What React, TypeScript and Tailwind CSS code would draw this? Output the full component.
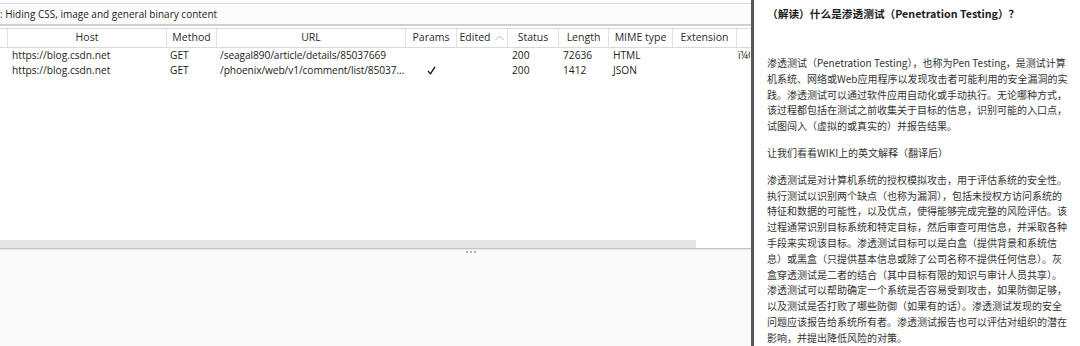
import React from 'react';

const columns = [
  { label: '', cell: 'border-r border-[#e2e2e2]' },
  { label: 'Host', cell: 'border-r border-[#e2e2e2]' },
  { label: 'Method', cell: 'border-r border-[#e2e2e2]' },
  { label: 'URL', cell: 'border-r border-[#e2e2e2]' },
  { label: 'Params', cell: 'border-r border-[#e2e2e2]' },
  { label: 'Edited', cell: 'border-r border-[#e2e2e2]' },
  { label: 'Status', cell: 'border-r border-[#e2e2e2]' },
  { label: 'Length', cell: 'border-r border-[#e2e2e2]' },
  { label: 'MIME type', cell: 'border-r border-[#e2e2e2]' },
  { label: 'Extension', cell: 'border-r border-[#e2e2e2]' },
  { label: '', cell: '' },
];

const rows = [
  {
    host: 'https://blog.csdn.net',
    method: 'GET',
    url: '/seagal890/article/details/85037669',
    params: false,
    status: '200',
    length: '72636',
    mime: 'HTML',
    title: 'ï¼Œ',
  },
  {
    host: 'https://blog.csdn.net',
    method: 'GET',
    url: '/phoenix/web/v1/comment/list/85037...',
    params: true,
    status: '200',
    length: '1412',
    mime: 'JSON',
    title: '',
  },
];

const intro = [
  '渗透测试（Penetration Testing），也称为Pen Testing，是测试计算',
  '机系统、网络或Web应用程序以发现攻击者可能利用的安全漏洞的实',
  '践。渗透测试可以通过软件应用自动化或手动执行。无论哪种方式，',
  '该过程都包括在测试之前收集关于目标的信息，识别可能的入口点，',
  '试图闯入（虚拟的或真实的）并报告结果。',
];

const wiki = [
  '渗透测试是对计算机系统的授权模拟攻击，用于评估系统的安全性。',
  '执行测试以识别两个缺点（也称为漏洞），包括未授权方访问系统的',
  '特征和数据的可能性，以及优点，使得能够完成完整的风险评估。该',
  '过程通常识别目标系统和特定目标，然后审查可用信息，并采取各种',
  '手段来实现该目标。渗透测试目标可以是白盒（提供背景和系统信',
  '息）或黑盒（只提供基本信息或除了公司名称不提供任何信息）。灰',
  '盒穿透测试是二者的结合（其中目标有限的知识与审计人员共享）。',
  '渗透测试可以帮助确定一个系统是否容易受到攻击，如果防御足够，',
  '以及测试是否打败了哪些防御（如果有的话）。渗透测试发现的安全',
  '问题应该报告给系统所有者。渗透测试报告也可以评估对组织的潜在',
  '影响，并提出降低风险的对策。',
];

const gridCols =
  'grid grid-cols-[8px_159px_50px_189px_51px_51px_51px_50px_64px_64px_13px]';

const SortUp = () => (
  <svg width="9" height="6" viewBox="0 0 9 6" className="ml-[5px]">
    <path d="M0.5 5 L4.5 1 L8.5 5" fill="none" stroke="#b5b5b5" strokeWidth="1" />
  </svg>
);

const Check = () => (
  <svg width="9" height="9" viewBox="0 0 9 9">
    <path d="M1 4.8 L3.4 7.8 L8 0.8" fill="none" stroke="#111" strokeWidth="1.3" strokeLinejoin="round" />
  </svg>
);

const App: React.FC = () => {
  return (
    <div className="flex h-[346px] w-[1080px] overflow-hidden bg-white">
      {/* Proxy history pane */}
      <div
        className="flex w-[751px] flex-col text-[10px] text-[#1b1b1b]"
        style={{ fontFamily: '"Open Sans", "Noto Sans", sans-serif' }}
      >
        <div className="flex-1">
          <div className="h-[3px]" />
          <div className="flex h-[23px] items-center whitespace-nowrap border-t border-b-2 border-t-[#dedede] border-b-[#cfcfcf] bg-[#fcfcfc] text-[10px]">
            : Hiding CSS, image and general binary content
          </div>
          <div className="h-[2px]" />

          {/* Table header */}
          <div className={`${gridCols} h-[20px] border-t border-b border-[#dadada] bg-white text-[10.5px] text-[#2a2a2a]`}>
            {columns.map((col, i) => (
              <div key={i} className={`flex items-center justify-center whitespace-nowrap ${col.cell}`}>
                {col.label}
                {col.label === 'Edited' && <SortUp />}
              </div>
            ))}
          </div>

          {/* Rows */}
          {rows.map((row, i) => (
            <div key={i} className={`${gridCols} h-[15px] items-center text-[10.2px] leading-[15px]`}>
              <div />
              <div className="overflow-hidden whitespace-nowrap pl-[4px]">{row.host}</div>
              <div className="overflow-hidden whitespace-nowrap pl-[3px]">{row.method}</div>
              <div className="overflow-hidden whitespace-nowrap pl-[3px] tracking-[-0.1px]">{row.url}</div>
              <div className="flex items-center justify-center">{row.params && <Check />}</div>
              <div />
              <div className="pl-[4px]">{row.status}</div>
              <div className="pl-[4px]">{row.length}</div>
              <div className="pl-[4px]">{row.mime}</div>
              <div />
              <div className="overflow-hidden whitespace-nowrap pl-[1px] text-[10px]">{row.title}</div>
            </div>
          ))}
        </div>

        {/* Horizontal scrollbar */}
        <div className="h-[8px] bg-white">
          <div className="h-full w-[696px] bg-[#e6e6e6]" />
        </div>
        <div className="h-[2px] border-t border-[#c6c6ce] bg-[#e4e4ea]" />

        {/* Request / response splitter */}
        <div className="relative h-[96px] bg-[#fafafa]">
          <div className="absolute left-[466px] top-[1px] flex gap-[2px]">
            <span className="h-[2px] w-[2px] rounded-full bg-[#9a9a9a]" />
            <span className="h-[2px] w-[2px] rounded-full bg-[#9a9a9a]" />
            <span className="h-[2px] w-[2px] rounded-full bg-[#9a9a9a]" />
          </div>
        </div>
      </div>

      {/* Divider */}
      <div className="w-[3px] bg-[#595959]" />

      {/* Article pane */}
      <div
        className="flex-1 pl-[13px] pt-[6px] text-[10px] leading-[15.8px] text-[#333]"
        style={{ fontFamily: '"Noto Sans CJK SC", "Noto Sans", sans-serif' }}
      >
        <h1 className="whitespace-nowrap text-[10.7px] leading-[16px] font-bold text-[#1a1a1a]">
          （解读）什么是渗透测试（Penetration Testing）？
        </h1>
        <div className="mt-[33px]">
          {intro.map((line) => (
            <div key={line} className="whitespace-nowrap">{line}</div>
          ))}
        </div>
        <p className="mt-[11px] whitespace-nowrap">让我们看看WIKI上的英文解释（翻译后）</p>
        <div className="mt-[11px]">
          {wiki.map((line) => (
            <div key={line} className="whitespace-nowrap">{line}</div>
          ))}
        </div>
      </div>
    </div>
  );
};

export default App;
